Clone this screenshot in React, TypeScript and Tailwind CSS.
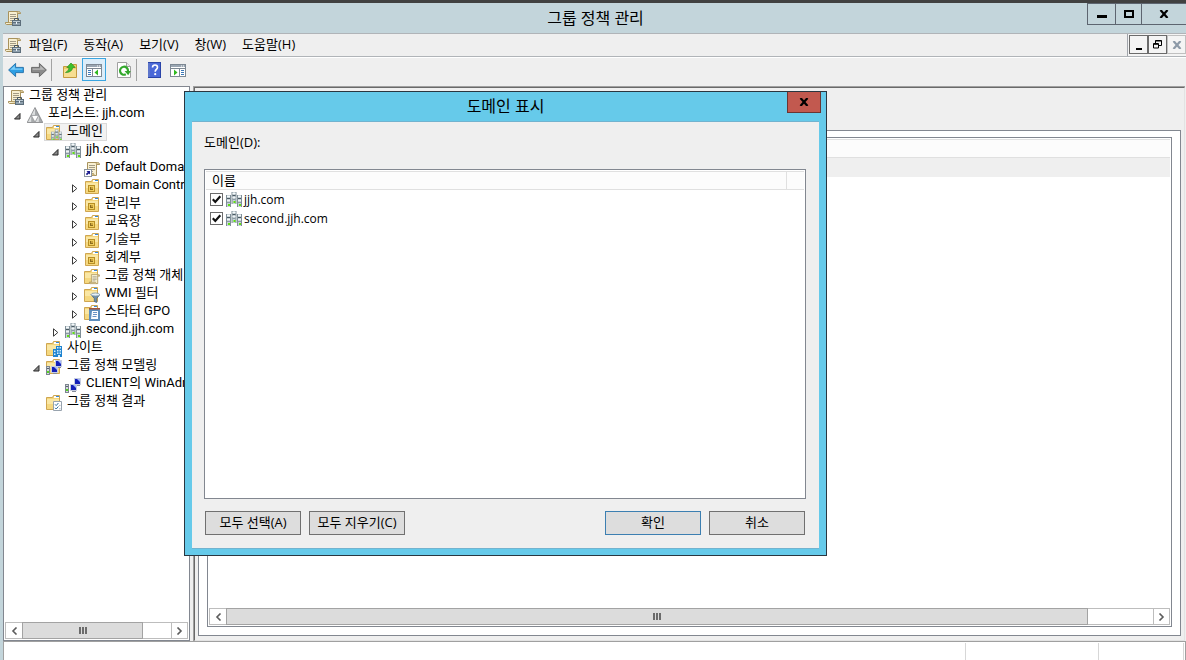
import { useState, type ReactNode } from "react";

/* ---------- icon building blocks (16 x 16 grid) ---------- */

function Icon({ children, size = 16 }: { children: ReactNode; size?: number }) {
  return (
    <svg width={size} height={size} viewBox="0 0 16 16" aria-hidden="true" className="block shrink-0">
      {children}
    </svg>
  );
}

function Folder() {
  return (
    <>
      <path d="M.5 2.5h6l1-2h6v14H.5z" fill="#f4d67c" stroke="#cfa651" />
      <path d="M8 1h5v2H8z" fill="#fff" />
      <path d="M10 1h3v1h-3z" fill="#3a8ad8" />
      <path d="M1 4h12v10H1z" fill="#fae7a4" />
      <path d="M1 9h12v5H1z" fill="#f5d880" />
    </>
  );
}

function Tower({ x, y, h }: { x: number; y: number; h: number }) {
  return (
    <g>
      <rect x={x} y={y} width="5" height={h} fill="#7f8e97" />
      <rect x={x + 1} y={y} width="3" height={h} fill="#c9d3d8" />
      <rect x={x + 1} y={y + 1} width="3" height="1" fill="#f7fafb" />
      <rect x={x + 1} y={y + 3} width="3" height="1" fill="#4a5962" />
      <rect x={x + 1} y={y + 5} width="3" height="1" fill="#f0f4f6" />
      <rect x={x + 1} y={y + 7} width="3" height="1" fill="#8b9aa3" />
      <rect x={x + 2} y={y + h - 3} width="2" height="2" fill="#5fe010" />
    </g>
  );
}

function Towers() {
  return (
    <>
      <Tower x={5.5} y={0} h={12} />
      <Tower x={0} y={3} h={12} />
      <Tower x={11} y={3} h={12} />
    </>
  );
}

function Scroll() {
  return (
    <>
      <path d="M3.5 1.5h10q2 0 2 2h-3v11h-11q-1.500-.5-1-2h3z" fill="#f8f0d2" stroke="#a8925c" />
      <path d="M12.500 1.500q-.5 1 0 2h3M.5 12.500h9q0 1.500 1.500 2" fill="#d9c48a" stroke="#a8925c" strokeWidth=".8" />
      <path d="M5 4.500h6M5 6.500h6M5 8.500h6M5 10.500h4" stroke="#98917c" strokeWidth=".9" />
    </>
  );
}

function Screen({ x, y }: { x: number; y: number }) {
  return (
    <g>
      <rect x={x} y={y} width="7" height="7" fill="#c6cde0" />
      <rect x={x + 1} y={y + 1} width="5" height="5" fill="#1420b8" />
      <path d={`M${x + 3} ${y + 1}h3v3z`} fill="#a5b8fa" />
      <path d={`M${x + 2} ${y + 7.5}h4`} stroke="#858c9a" strokeWidth="1" />
    </g>
  );
}

function Screens() {
  return (
    <>
      <Screen x={9} y={1} />
      <Screen x={5} y={7} />
      <rect x="0" y="7" width="4" height="9" fill="#7d8590" />
      <rect x="1" y="8" width="2" height="7" fill="#d6dade" />
      <rect x="1" y="9" width="2" height="1" fill="#59616d" />
      <rect x="1" y="12" width="2" height="2" fill="#54d420" />
    </>
  );
}

const ConsoleIcon = ({ size = 16 }: { size?: number }) => (
  <Icon size={size}>
    <Scroll />
    <path d="M9.500 10V8.500h4V10" fill="none" stroke="#46545f" />
    <rect x="7" y="10" width="9" height="6" fill="#5d6e7b" />
    <rect x="8" y="11" width="7" height="1" fill="#b9c8d2" />
    <rect x="8" y="13" width="7" height="2" fill="#8fa0ad" />
    <rect x="11" y="12" width="1" height="2" fill="#f0f4f7" />
  </Icon>
);

const ForestIcon = () => (
  <Icon>
    <path d="M8 .5 15.800 15.500H.2z" fill="#a7aaac" stroke="#77797b" strokeWidth=".7" />
    <path d="M8 1.500V8H4.600zM4.200 9v6H1zM11.800 9v6H8.600z" fill="#dcdedf" />
    <path d="M4.400 8.400h7.200L8 15z" fill="#fff" stroke="#8a8c8e" strokeWidth=".6" />
  </Icon>
);

const DomainsIcon = () => (
  <Icon>
    <Folder />
    <g transform="translate(5 4.500) scale(.7 .76)">
      <Towers />
    </g>
  </Icon>
);

const DomainIcon = () => (
  <Icon>
    <Towers />
  </Icon>
);

const LinkIcon = () => (
  <Icon>
    <Scroll />
    <rect x=".5" y="8.500" width="7" height="7" fill="#fff" stroke="#8c95a0" />
    <path d="M2.500 10H6v3.500L4.900 12.400 3 14.300 1.800 13.100 3.700 11.200z" fill="#1b1b8f" />
  </Icon>
);

const UnitIcon = () => (
  <Icon>
    <g transform="translate(1 0)">
      <Folder />
      <rect x="3.500" y="6.500" width="6" height="6" fill="#f0cf62" stroke="#b98f24" />
      <rect x="5" y="8" width="3" height="3" fill="#8b6c1e" />
      <rect x="6" y="8" width="2" height="2" fill="#c9a23a" />
    </g>
  </Icon>
);

const ObjectsIcon = () => (
  <Icon>
    <Folder />
    <g transform="translate(5 4.500) scale(.7)">
      <Scroll />
    </g>
  </Icon>
);

const FilterIcon = () => (
  <Icon>
    <Folder />
    <path d="M7 7.500h9l-3.300 4v4l-2.400-1v-3z" fill="#6f8ea6" stroke="#4c677b" strokeWidth=".8" />
    <ellipse cx="11.400" cy="7.500" rx="4.300" ry="1.500" fill="#e6f0f6" stroke="#7b95a8" strokeWidth=".8" />
  </Icon>
);

const StarterIcon = () => (
  <Icon>
    <Folder />
    <rect x="5" y="4" width="11" height="12" fill="#5e8fbd" />
    <rect x="5" y="3" width="11" height="1.500" fill="#a5573a" />
    <path d="M8 6h6v8H7z" fill="#fff" />
    <path d="M9 7.500h4M9 9.500h4M8.500 11.500h4" stroke="#6b94c4" />
  </Icon>
);

const SitesIcon = () => (
  <Icon>
    <Folder />
    <path d="M7 16V8h3V5h6v11z" fill="#1f84d0" />
    <path d="M11 6h1.500v1.500H11zM13.500 6H15v1.500h-1.500zM11 9h1.500v1.500H11zM13.500 9H15v1.500h-1.500zM8 9.500h1.500V11H8zM11 11.500h1.500V13H11zM13.500 11.500H15V13h-1.500zM8 12.500h1.500V14H8zM12 14h2v2h-2z" fill="#d6f0ff" />
  </Icon>
);

const ModelingIcon = () => (
  <Icon>
    <Folder />
    <Screens />
  </Icon>
);

const ModelIcon = () => (
  <Icon>
    <Screens />
  </Icon>
);

const ResultsIcon = () => (
  <Icon>
    <Folder />
    <path d="M7.500 6.500h8v9h-8z" fill="#fff" stroke="#98a3ae" />
    <path d="M9 9.300 10.200 10.600 12.400 8M9 12.800 10.200 14 12.400 11.500" fill="none" stroke="#2f6f9f" strokeWidth="1" />
    <path d="M13 10.400h1.600M13 13.800h1.600" stroke="#9aa3ac" strokeWidth=".8" />
  </Icon>
);

/* ---------- toolbar icons ---------- */

const Arrow = ({ back = false }: { back?: boolean }) => (
  <Icon>
    <g transform={back ? undefined : "matrix(-1 0 0 1 16 0)"}>
      <path
        d="M.6 8 7.600 1.400v4h7.800v5.200H7.600v4z"
        fill={back ? "#2f9fe4" : "#8b8b8b"}
        stroke={back ? "#1f6ea8" : "#5f5f5f"}
        strokeWidth=".9"
      />
      <path d="M2.200 7.800 6.800 3.400v3h7.600v1.400z" fill={back ? "#7fd0fa" : "#bababa"} />
    </g>
  </Icon>
);

const FolderUpIcon = () => (
  <Icon>
    <path d="M1.500 4.500h8l1-2h4v13h-13z" fill="#f0cd6c" stroke="#c49a40" />
    <path d="M2 7h12v8H2z" fill="#f7de92" />
    <path d="M3.500 10.500Q7 9 7 5.500H4.800L9 1l4.200 4.500h-2.500q-.7 5-7.200 5z" fill="#3cc02b" stroke="#2b8f22" strokeWidth=".7" />
  </Icon>
);

const PaneIcon = ({ flip = false }: { flip?: boolean }) => (
  <Icon>
    <rect x=".5" y="2.500" width="15" height="12" fill="#fff" stroke="#7d8893" />
    <path d="M1 3h14v2H1z" fill="#9aa6b2" />
    <path d="M11 4h1M13 4h1" stroke="#fff" strokeWidth="1" />
    <path d="M1 6.500h14" stroke="#7d8893" />
    {flip ? (
      <>
        <path d="M9.500 6.500v8" stroke="#7d8893" />
        <path d="M11 8.500h3M11 10.500h3M11 12.500h3" stroke="#3c78b8" />
        <path d="M4 7.500 7.500 10.500 4 13.500z" fill="#2fb81e" />
      </>
    ) : (
      <>
        <path d="M6.500 6.500v8" stroke="#7d8893" />
        <path d="M2 8.500h3M2 10.500h3M2 12.500h3" stroke="#3c78b8" />
        <path d="M12 7.500 8.500 10.500 12 13.500z" fill="#2fb81e" />
      </>
    )}
  </Icon>
);

const RefreshIcon = () => (
  <Icon>
    <path d="M1.500.5h9l4 4v11h-13z" fill="#fff" stroke="#a0a0a0" />
    <path d="M10.500.5v4h4" fill="#e8e8e8" stroke="#a0a0a0" />
    <path d="M9.800 12.300A4 4 0 1 1 12 9" fill="none" stroke="#33a82c" strokeWidth="2.200" />
    <path d="M8.600 9h6.200l-2.600 4.200z" fill="#33a82c" />
  </Icon>
);

const HelpIcon = () => (
  <Icon>
    <rect x="2" y="0" width="13" height="16" fill="#2a44a8" />
    <rect x="4" y="1" width="10" height="14" fill="#4a68d8" />
    <path d="M3 1v14" stroke="#8fa6ee" />
    <path d="M6.500 5.600Q6.500 3 9 3t2.500 2.300q0 1.300-1.200 2.200Q9.200 8.300 9.200 9.800" fill="none" stroke="#fff" strokeWidth="1.600" />
    <circle cx="9.200" cy="12.200" r="1.100" fill="#fff" />
  </Icon>
);

/* ---------- tree ---------- */

type Node = { label: string; icon: ReactNode; open?: boolean; selected?: boolean; children?: Node[] };

const tree: Node[] = [
  {
    label: "포리스트: jjh.com",
    icon: <ForestIcon />,
    open: true,
    children: [
      {
        label: "도메인",
        icon: <DomainsIcon />,
        open: true,
        selected: true,
        children: [
          {
            label: "jjh.com",
            icon: <DomainIcon />,
            open: true,
            children: [
              { label: "Default Domain Policy", icon: <LinkIcon /> },
              { label: "Domain Controllers", icon: <UnitIcon />, open: false },
              { label: "관리부", icon: <UnitIcon />, open: false },
              { label: "교육장", icon: <UnitIcon />, open: false },
              { label: "기술부", icon: <UnitIcon />, open: false },
              { label: "회계부", icon: <UnitIcon />, open: false },
              { label: "그룹 정책 개체", icon: <ObjectsIcon />, open: false },
              { label: "WMI 필터", icon: <FilterIcon />, open: false },
              { label: "스타터 GPO", icon: <StarterIcon />, open: false },
            ],
          },
          { label: "second.jjh.com", icon: <DomainIcon />, open: false },
        ],
      },
      { label: "사이트", icon: <SitesIcon /> },
      {
        label: "그룹 정책 모델링",
        icon: <ModelingIcon />,
        open: true,
        children: [{ label: "CLIENT의 WinAdmin", icon: <ModelIcon /> }],
      },
      { label: "그룹 정책 결과", icon: <ResultsIcon /> },
    ],
  },
];

function Expander({ open }: { open?: boolean }) {
  if (open === undefined) return <span className="w-[19px] shrink-0" />;
  return (
    <span className="flex w-[19px] shrink-0 justify-center pt-[7px]">
      <svg width="9" height="9" viewBox="0 0 9 9" aria-hidden="true">
        {open ? (
          <path d="M7 1.500V7H1.500z" fill="#8a8a8a" stroke="#262626" />
        ) : (
          <path d="M2.500.8 6.800 4.500 2.500 8.200z" fill="#fff" stroke="#3a3a3a" />
        )}
      </svg>
    </span>
  );
}

function Branch({ nodes, nested = false }: { nodes: Node[]; nested?: boolean }) {
  return (
    <ul className={nested ? "pl-[19px]" : ""}>
      {nodes.map((n) => (
        <li key={n.label}>
          <div className="flex h-[18px] whitespace-nowrap">
            <Expander open={n.open} />
            <span
              className={
                n.selected
                  ? "-ml-0.5 flex h-[18px] bg-[#f2f2f2] pr-1 pl-0.5 outline -outline-offset-1 outline-[#dadada]"
                  : "flex h-[18px]"
              }
            >
              <span className="w-[21px] pt-0.5">{n.icon}</span>
              <span className="leading-[15px]">{n.label}</span>
            </span>
          </div>
          {n.children && <Branch nodes={n.children} nested />}
        </li>
      ))}
    </ul>
  );
}

/* ---------- scroll bar ---------- */

function Chevron({ right = false }: { right?: boolean }) {
  return (
    <svg width="7" height="8" viewBox="0 0 7 8" aria-hidden="true">
      <path d={right ? "M1.500.5 5 4 1.500 7.500" : "M5.500.5 2 4 5.500 7.500"} fill="none" stroke="#5c5c5c" strokeWidth="1.600" />
    </svg>
  );
}

function ScrollBar({ thumb }: { thumb: string }) {
  const btn = "flex w-4 shrink-0 items-center justify-center";
  return (
    <div className="flex h-[17px] border border-[#bdbdbd] bg-white">
      <button type="button" aria-label="왼쪽으로" className={btn}>
        <Chevron />
      </button>
      <div className="flex flex-1">
        <div className={`-my-px flex items-center justify-center gap-px border border-[#a3a3a3] bg-[#dcdcdc] ${thumb}`}>
          <span className="h-[7px] w-0.5 bg-[#6b6b6b]" />
          <span className="h-[7px] w-0.5 bg-[#6b6b6b]" />
          <span className="h-[7px] w-0.5 bg-[#6b6b6b]" />
        </div>
      </div>
      <button type="button" aria-label="오른쪽으로" className={`border-l border-[#bdbdbd] ${btn}`}>
        <Chevron right />
      </button>
    </div>
  );
}

/* ---------- window chrome ---------- */

const CloseGlyph = ({ color }: { color: string }) => (
  <svg width="10" height="8" viewBox="0 0 10 8" aria-hidden="true">
    <path d="M1.500 0 8.500 8M8.500 0 1.500 8" stroke={color} strokeWidth="2.200" />
  </svg>
);

function TitleBar() {
  return (
    <header className="flex h-[33px] shrink-0 border-t-[3px] border-[#414141] bg-[#c3d5db]">
      <div className="flex flex-1 items-center pl-[5px]">
        <ConsoleIcon />
      </div>
      <h1 className="self-center text-base leading-none">그룹 정책 관리</h1>
      <div className="flex flex-1 items-start justify-end">
        <div className="flex h-[22px] border border-r-0 border-[#5d6570]">
          <button type="button" aria-label="최소화" className="flex w-7 items-center justify-center border-r border-[#5d6570]">
            <span className="mt-1 h-[3px] w-2.5 bg-black" />
          </button>
          <button type="button" aria-label="최대화" className="flex w-[26px] items-center justify-center border-r border-[#5d6570]">
            <span className="h-2 w-2.5 border-2 border-black" />
          </button>
          <button type="button" aria-label="닫기" className="flex w-11 items-center justify-center">
            <CloseGlyph color="#000" />
          </button>
        </div>
      </div>
    </header>
  );
}

function MenuBar() {
  const items = ["파일(F)", "동작(A)", "보기(V)", "창(W)", "도움말(H)"];
  const box = "flex h-[19px] w-[19px] items-center justify-center border";
  return (
    <nav className="flex h-6 shrink-0 border-t border-b border-[#b0b4b8] bg-[#efefef]">
      <div className="flex flex-1 items-center pl-0.5">
        <ConsoleIcon />
        <div className="ml-2 flex gap-4">
          {items.map((t) => (
            <button type="button" key={t}>
              {t}
            </button>
          ))}
        </div>
      </div>
      <div className="flex border-l border-[#a0a4aa] bg-[#f4f4f4] pt-px pl-px">
        <button type="button" aria-label="자식 창 최소화" className={`border-[#6b6b6b] ${box}`}>
          <span className="mt-2 h-0.5 w-1.5 bg-black" />
        </button>
        <button type="button" aria-label="이전 크기로" className={`border-[#6b6b6b] ${box}`}>
          <svg width="9" height="9" viewBox="0 0 9 9" aria-hidden="true">
            <path d="M2.500 3V.5h6v5H6M2.500 1h6" fill="none" stroke="#000" />
            <path d="M.5 3.500h5v4.500h-5zM.5 4.300h5" fill="none" stroke="#000" />
          </svg>
        </button>
        <button type="button" aria-label="자식 창 닫기" className={`border-[#c0c0c0] ${box}`}>
          <CloseGlyph color="#8d9aa8" />
        </button>
      </div>
    </nav>
  );
}

function ToolBar() {
  const sep = <span className="h-[22px] w-px bg-[#a3a3a3]" />;
  return (
    <div className="flex h-[29px] shrink-0 items-center border-t border-white bg-[#efefef] pb-[5px] pl-[5px]">
      <button type="button" aria-label="뒤로"><Arrow back /></button>
      <button type="button" aria-label="앞으로" className="mr-1 ml-[7px]"><Arrow /></button>
      {sep}
      <button type="button" aria-label="위로" className="mr-1 ml-2.5"><FolderUpIcon /></button>
      <button
        type="button"
        aria-label="콘솔 트리 표시"
        aria-pressed="true"
        className="flex h-[23px] w-6 items-center justify-center border border-[#3aa5e0] bg-[#dcedf9]"
      >
        <PaneIcon />
      </button>
      <button type="button" aria-label="새로 고침" className="mr-1 ml-2.5"><RefreshIcon /></button>
      {sep}
      <button type="button" aria-label="도움말" className="ml-[9px]"><HelpIcon /></button>
      <button type="button" aria-label="작업 창 표시" className="ml-2"><PaneIcon flip /></button>
    </div>
  );
}

/* ---------- dialog ---------- */

function CheckRow({ label }: { label: string }) {
  const [on, setOn] = useState(true);
  return (
    <label className="flex h-[19px] items-center">
      <span className="grid h-[13px] w-[13px]">
        <input
          type="checkbox"
          checked={on}
          onChange={() => setOn(!on)}
          className="col-start-1 row-start-1 h-[13px] w-[13px] appearance-none border border-[#6b6b6b] bg-white"
        />
        {on && (
          <svg viewBox="0 0 13 13" aria-hidden="true" className="pointer-events-none col-start-1 row-start-1 h-[13px] w-[13px]">
            <path d="M2.800 6.200 5.300 8.900 10.300 3.200" fill="none" stroke="#111" strokeWidth="2.200" />
          </svg>
        )}
      </span>
      <span className="mr-0.5 ml-[3px]"><DomainIcon /></span>
      <span className="text-[12px]">{label}</span>
    </label>
  );
}

function DialogButton({ children, primary = false }: { children: ReactNode; primary?: boolean }) {
  return (
    <button
      type="button"
      className={`h-6 w-24 border bg-[#dddddd] pb-0.5 leading-none ${primary ? "border-[#3c7fb1]" : "border-[#707070]"}`}
    >
      {children}
    </button>
  );
}

function DomainDialog() {
  return (
    <section
      role="dialog"
      aria-labelledby="dialog-title"
      className="absolute top-[91px] left-[184px] flex h-[465px] w-[643px] flex-col border border-[#2a3640] bg-[#66caea] px-[7px] pb-1.5"
    >
      <header className="flex h-[29px] shrink-0">
        <span className="flex-1" />
        <h2 id="dialog-title" className="pt-1.5 text-base leading-none">도메인 표시</h2>
        <div className="flex flex-1 items-start justify-end">
          <button type="button" aria-label="닫기" className="-mr-0.5 flex h-[21px] w-[34px] items-center justify-center border border-t-0 border-[#6b3432] bg-[#c2594f]">
            <CloseGlyph color="#000" />
          </button>
        </div>
      </header>
      <div className="flex flex-1 flex-col border-t border-b border-[#72b3cf] bg-[#efefef] pt-[11px] pr-[13px] pb-[13px] pl-3">
        <p className="leading-[18px]">도메인(D):</p>
        <div className="mt-[18px] flex-1 border border-[#828790] bg-white px-px pt-px">
          <div className="flex h-[19px] border-t border-b border-[#e0e0e0] bg-[#fcfcfc]">
            <div className="mr-[17px] flex flex-1 items-center border-r border-[#e0e0e0] pl-1.5 leading-[17px]">이름</div>
          </div>
          <div className="pl-1">
            <CheckRow label="jjh.com" />
            <CheckRow label="second.jjh.com" />
          </div>
        </div>
        <div className="mt-3 flex gap-2 px-px">
          <DialogButton>모두 선택(A)</DialogButton>
          <DialogButton>모두 지우기(C)</DialogButton>
          <span className="flex-1" />
          <DialogButton primary>확인</DialogButton>
          <DialogButton>취소</DialogButton>
        </div>
      </div>
    </section>
  );
}

/* ---------- page ---------- */

export default function App() {
  return (
    <div className="relative flex h-screen flex-col overflow-hidden bg-[#c3d5db] font-['Open_Sans','Noto_Sans_CJK_KR',sans-serif] text-[13px] text-black select-none">
      <TitleBar />
      <div className="flex min-h-0 flex-1 flex-col pl-[3px]">
        <MenuBar />
        <ToolBar />
        <main className="flex min-h-0 flex-1 bg-[#efefef] pr-px">
          <aside className="flex w-[187px] shrink-0 flex-col overflow-hidden border border-[#828790] bg-white px-px pb-px font-['Roboto','Noto_Sans_CJK_KR',sans-serif]">
            <div className="min-h-0 flex-1 overflow-hidden pl-[3px]">
              <div className="flex h-[18px]">
                <span className="w-[21px] pt-0.5"><ConsoleIcon /></span>
                <span className="leading-[15px]">그룹 정책 관리</span>
              </div>
              <Branch nodes={tree} />
            </div>
            <ScrollBar thumb="w-[121px]" />
          </aside>
          <div className="ml-[3px] flex min-w-0 flex-1 border-t border-l border-[#a0a0a0]">
            <div className="flex min-w-0 flex-1 border-t border-r border-b border-l border-t-[#696969] border-r-[#e3e3e3] border-b-[#e3e3e3] border-l-[#696969] px-[3px] pt-[42px] pb-1">
              <div className="flex flex-1 border border-[#828790] bg-white px-2 pt-1.5 pb-2">
                <div className="flex flex-1 flex-col border border-[#828790] px-px py-px">
                  <div className="h-[19px] border-t border-b border-[#e0e0e0] bg-[#fcfcfc]" />
                  <div className="h-[19px] bg-[#efefef]" />
                  <div className="flex-1" />
                  <ScrollBar thumb="w-[93%]" />
                </div>
              </div>
            </div>
          </div>
        </main>
        <footer className="flex h-[19px] shrink-0 border-t border-r border-l border-[#a0a0a0] bg-white pt-px">
          <div className="flex-1 border-r border-[#d7d7d7]" />
          <div className="w-[133px] border-r border-[#d7d7d7]" />
          <div className="mr-px w-[85px] border-r border-[#d7d7d7]" />
        </footer>
      </div>
      <DomainDialog />
    </div>
  );
}
